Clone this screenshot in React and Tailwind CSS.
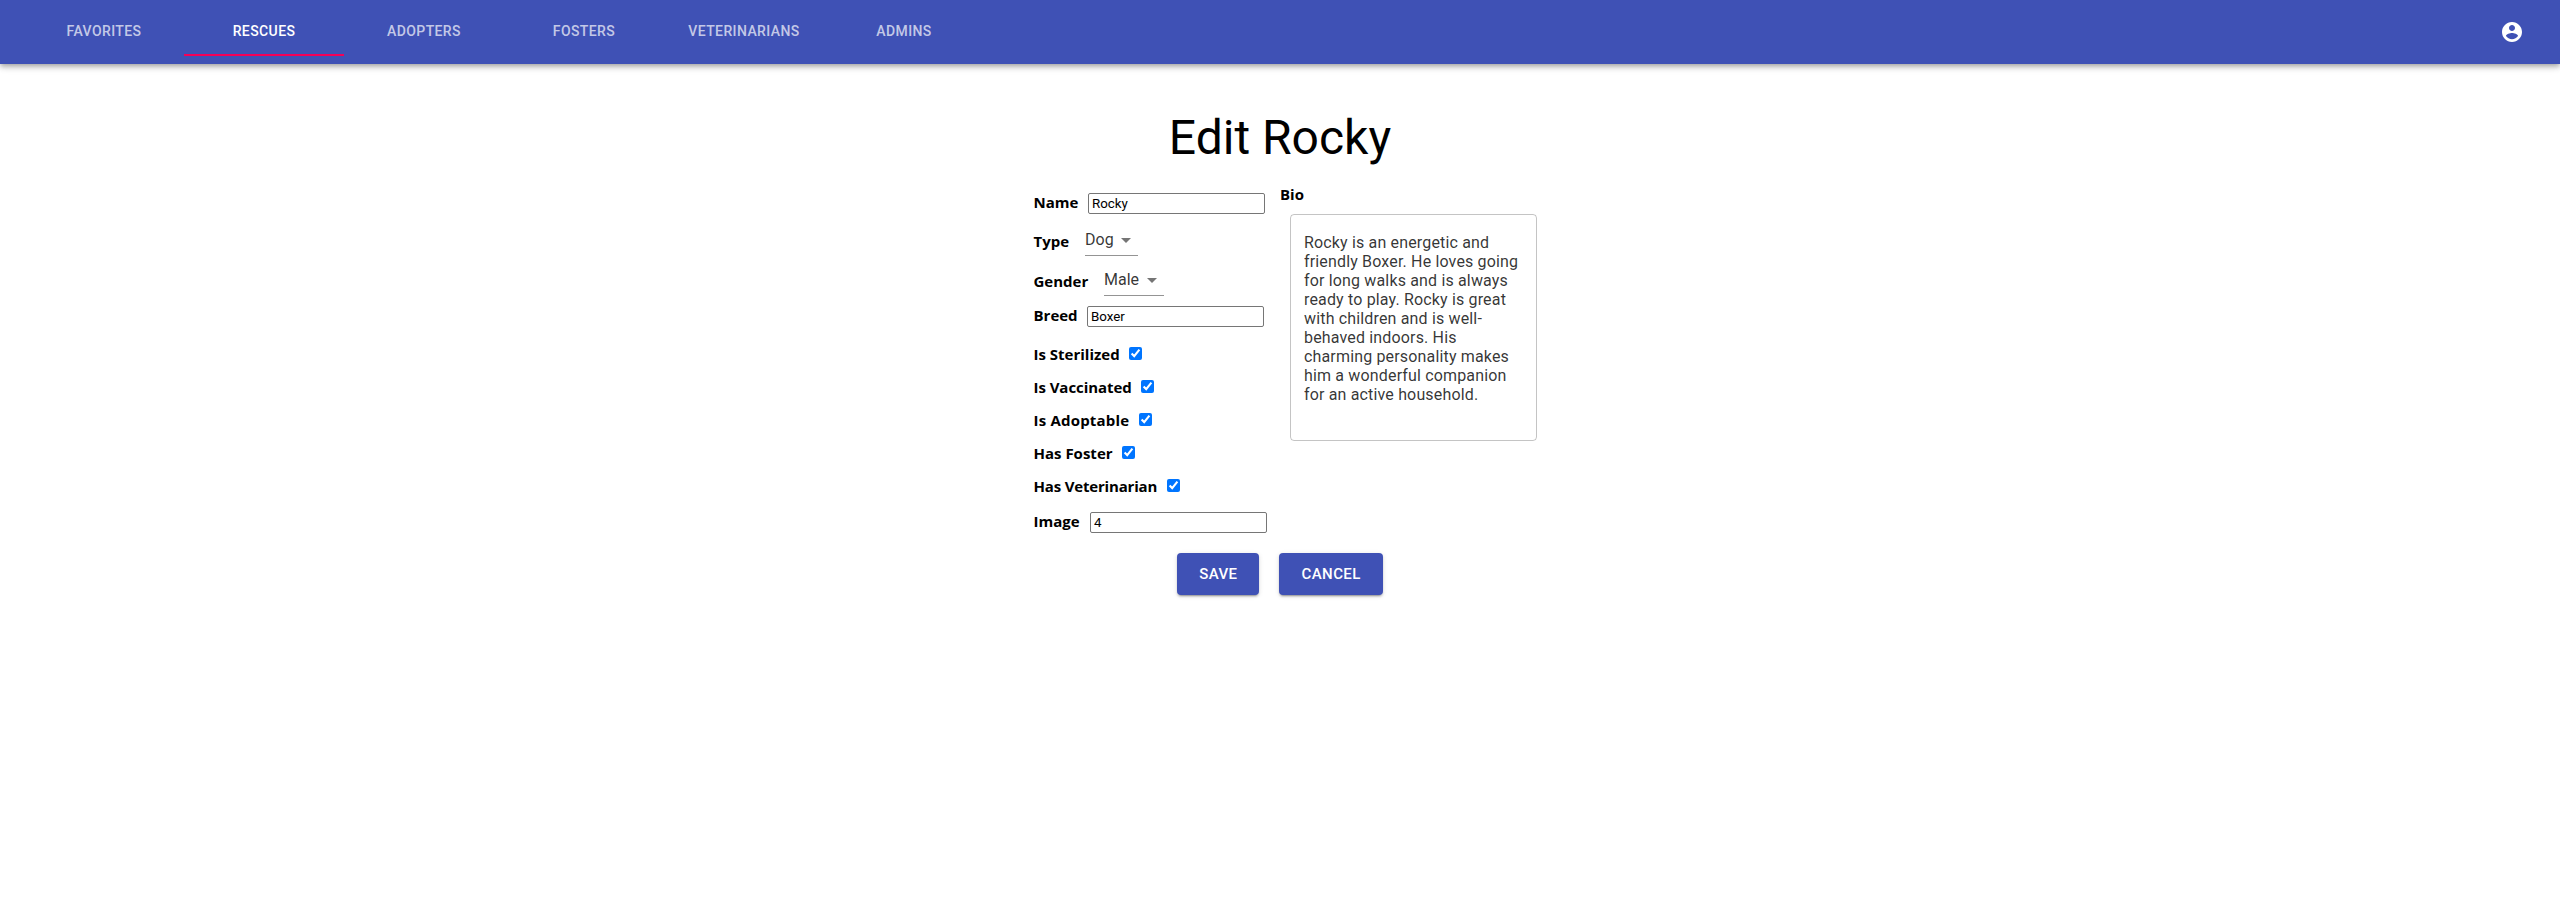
import { useState } from "react";

const tabs = ["Favorites", "Rescues", "Adopters", "Fosters", "Veterinarians", "Admins"];

const bio =
  "Rocky is an energetic and friendly Boxer. He loves going for long walks and is always ready to play. Rocky is great with children and is well-behaved indoors. His charming personality makes him a wonderful companion for an active household.";

function Header({ active, onSelect }) {
  return (
    <header className="flex h-16 items-center bg-[#3f51b5] px-6 shadow-[0_2px_4px_-1px_rgba(0,0,0,0.2),0_4px_5px_0_rgba(0,0,0,0.14),0_1px_10px_0_rgba(0,0,0,0.12)]">
      <nav className="flex h-12 grow">
        {tabs.map((tab) => (
          <button
            key={tab}
            onClick={() => onSelect(tab)}
            className={
              tab === active
                ? "w-40 border-b-2 border-[#f50057] text-sm font-medium uppercase tracking-[0.02857em] text-white"
                : "w-40 border-b-2 border-transparent text-sm font-medium uppercase tracking-[0.02857em] text-white/70"
            }
          >
            {tab}
          </button>
        ))}
      </nav>
      <button aria-label="Account" className="p-3 text-white">
        <svg viewBox="0 0 24 24" className="size-6 fill-current">
          <path d="M12 2C6.48 2 2 6.48 2 12s4.48 10 10 10 10-4.48 10-10S17.52 2 12 2zm0 3c1.66 0 3 1.34 3 3s-1.34 3-3 3-3-1.34-3-3 1.34-3 3-3zm0 14.2c-2.5 0-4.71-1.28-6-3.22.03-1.99 4-3.08 6-3.08 1.99 0 5.97 1.09 6 3.08-1.29 1.94-3.5 3.22-6 3.22z" />
        </svg>
      </button>
    </header>
  );
}

function Label({ children, className = "" }) {
  return (
    <span className={`shrink-0 whitespace-nowrap font-['Open_Sans',sans-serif] text-[15px] font-bold leading-5 ${className}`}>
      {children}
    </span>
  );
}

function TextRow({ label, value, labelClass }) {
  return (
    <label className="flex h-[21px] items-center gap-2.5">
      <Label className={`pb-[3px] pl-[0.5px] ${labelClass}`}>{label}</Label>
      <input
        defaultValue={value}
        className="h-[21px] w-[177px] rounded-xs border border-[#767676] px-[3px] text-[13.333px]"
      />
    </label>
  );
}

function SelectRow({ label, value, labelClass, selectClass }) {
  return (
    <div className="flex h-8 items-center gap-4">
      <Label className={`pt-0.5 pl-[0.5px] ${labelClass}`}>{label}</Label>
      <div className={`flex h-8 items-center justify-between border-b border-[#949494] text-base leading-[19px] text-black/80 ${selectClass}`}>
        {value}
        <svg viewBox="0 0 24 24" className="size-6 fill-[#757575]">
          <path d="M7 10l5 5 5-5z" />
        </svg>
      </div>
    </div>
  );
}

function CheckRow({ label, labelClass }) {
  return (
    <label className="flex h-[33px] items-center gap-2.5">
      <Label className={`pl-[0.5px] ${labelClass}`}>{label}</Label>
      <input type="checkbox" defaultChecked className="size-[13px]" />
    </label>
  );
}

function ActionButton({ children }) {
  return (
    <button className="h-[42.25px] rounded bg-[#3f51b5] px-[22px] text-[15px] font-medium uppercase tracking-[0.02857em] text-white shadow-[0_3px_1px_-2px_rgba(0,0,0,0.2),0_2px_2px_0_rgba(0,0,0,0.14),0_1px_5px_0_rgba(0,0,0,0.12)]">
      {children}
    </button>
  );
}

export default function App() {
  const [active, setActive] = useState("Rescues");
  return (
    <div className="min-h-[910px] bg-white font-['Roboto',sans-serif] text-black">
      <Header active={active} onSelect={setActive} />
      <main className="mx-auto w-[514px] pt-[46px]">
        <h1 className="text-center text-5xl leading-[56px]">Edit Rocky</h1>
        <div className="flex items-start pt-5">
          <div className="flex w-[257px] flex-col pt-[7px] pl-[10px]">
            <TextRow label="Name" value="Rocky" labelClass="w-[45px]" />
            <div className="pt-[10px]">
              <SelectRow label="Type" value="Dog" labelClass="w-9" selectClass="w-[53px]" />
            </div>
            <div className="pt-2 pb-[10px]">
              <SelectRow label="Gender" value="Male" labelClass="w-[55px]" selectClass="w-[60px]" />
            </div>
            <TextRow label="Breed" value="Boxer" labelClass="w-11" />
            <div className="py-[10px]">
              <CheckRow label="Is Sterilized" labelClass="w-[86px]" />
              <CheckRow label="Is Vaccinated" labelClass="w-[98px] tracking-[-0.05px]" />
              <CheckRow label="Is Adoptable" labelClass="w-24 tracking-[0.2px]" />
              <CheckRow label="Has Foster" labelClass="w-[79px]" />
              <CheckRow label="Has Veterinarian" labelClass="w-31 tracking-[-0.18px]" />
            </div>
            <TextRow label="Image" value="4" labelClass="w-[47px]" />
          </div>
          <div className="w-[257px]">
            <div className="-mt-0.5 flex h-[30px] items-start">
              <Label>Bio</Label>
            </div>
            <div className="ml-[10px] h-[227px] w-[247px] rounded border border-black/23 px-[13px] py-[18px] text-base leading-[19px] tracking-[0.01em] text-black/80">
              {bio}
            </div>
          </div>
        </div>
        <div className="flex justify-center gap-5 pt-5">
          <ActionButton>Save</ActionButton>
          <ActionButton>Cancel</ActionButton>
        </div>
      </main>
    </div>
  );
}
